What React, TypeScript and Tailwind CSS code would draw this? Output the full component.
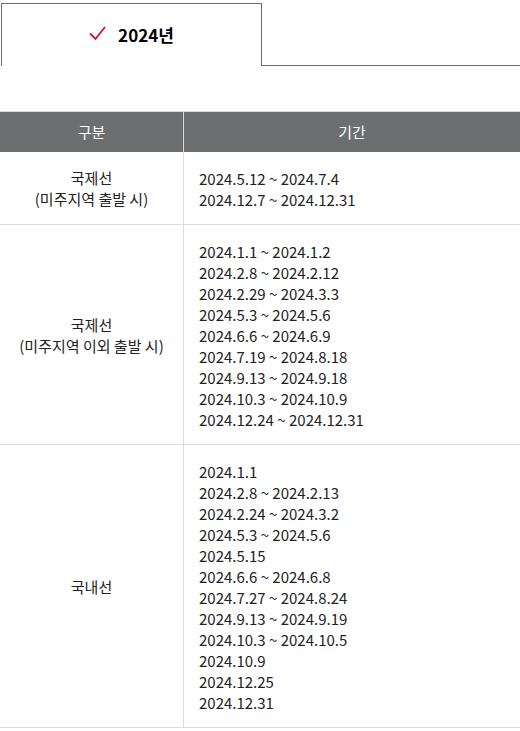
const rows = [
  {
    label: ["국제선", "(미주지역 출발 시)"],
    dates: ["2024.5.12 ~ 2024.7.4", "2024.12.7 ~ 2024.12.31"],
  },
  {
    label: ["국제선", "(미주지역 이외 출발 시)"],
    dates: [
      "2024.1.1 ~ 2024.1.2",
      "2024.2.8 ~ 2024.2.12",
      "2024.2.29 ~ 2024.3.3",
      "2024.5.3 ~ 2024.5.6",
      "2024.6.6 ~ 2024.6.9",
      "2024.7.19 ~ 2024.8.18",
      "2024.9.13 ~ 2024.9.18",
      "2024.10.3 ~ 2024.10.9",
      "2024.12.24 ~ 2024.12.31",
    ],
  },
  {
    label: ["국내선"],
    dates: [
      "2024.1.1",
      "2024.2.8 ~ 2024.2.13",
      "2024.2.24 ~ 2024.3.2",
      "2024.5.3 ~ 2024.5.6",
      "2024.5.15",
      "2024.6.6 ~ 2024.6.8",
      "2024.7.27 ~ 2024.8.24",
      "2024.9.13 ~ 2024.9.19",
      "2024.10.3 ~ 2024.10.5",
      "2024.10.9",
      "2024.12.25",
      "2024.12.31",
    ],
  },
];

const Tabs = () => (
  <div className="flex pt-[3px]">
    <div className="ml-px w-[261px] h-[63px] border border-b-0 border-[#6d6d6d] flex items-center justify-center gap-3">
      <svg width="17" height="15" viewBox="0 0 17 15" className="-mt-1">
        <path d="M1 7.5 L6.5 13 L16 1" fill="none" stroke="#d6112a" strokeWidth="1.8" />
      </svg>
      <span className="text-[17px] font-bold text-black">2024년</span>
    </div>
    <div className="grow border-b border-[#6d6d6d]" />
  </div>
);

export default function App() {
  return (
    <div
      className="w-[520px] bg-white text-[#222]"
      style={{ fontFamily: '"Noto Sans CJK KR", "Noto Sans", sans-serif' }}
    >
      <Tabs />
      <div className="mt-[45px] border-t border-[#d9d9d9]">
        <div className="flex h-[40px] bg-[#6d6e70] text-white text-[15px]">
          <div className="w-[184px] flex items-center justify-center border-r border-[#d9d9d9]">
            구분
          </div>
          <div className="grow flex items-center justify-center">기간</div>
        </div>
        {rows.map((row, i) => (
          <div key={i} className="flex border-b border-[#dcdcdc] text-[15px] leading-[21px]">
            <div className="w-[184px] flex flex-col items-center justify-center text-center border-r border-[#dcdcdc]">
              {row.label.map((l) => (
                <p key={l}>{l}</p>
              ))}
            </div>
            <div className="grow pt-[16px] pb-[14px] pl-[15px]">
              {row.dates.map((d) => (
                <p key={d}>{d}</p>
              ))}
            </div>
          </div>
        ))}
      </div>
    </div>
  );
}
